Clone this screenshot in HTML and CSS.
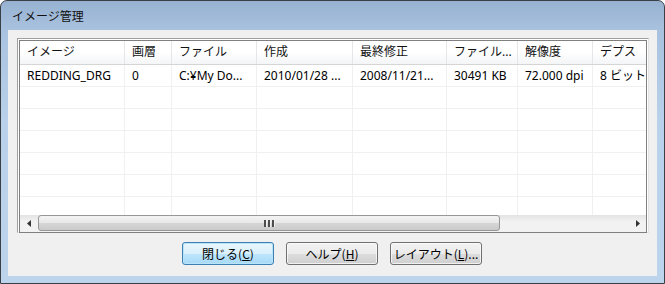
FILE: index.html
```html
<!DOCTYPE html>
<html lang="ja">
<head>
    <meta charset="UTF-8">
    <title>イメージ管理</title>
    <link rel="stylesheet" href="styles.css">
</head>
<body>
    <div class="window">
        <div class="titlebar">イメージ管理</div>

        <div class="client">
            <div class="listbox">
                <div class="list-inner">
                    <div class="grid header">
                        <div class="cell">イメージ</div>
                        <div class="cell">画層</div>
                        <div class="cell">ファイル</div>
                        <div class="cell">作成</div>
                        <div class="cell">最終修正</div>
                        <div class="cell">ファイル...</div>
                        <div class="cell">解像度</div>
                        <div class="cell">デプス</div>
                    </div>

                    <div class="rows">
                        <div class="grid row">
                            <div class="cell">REDDING_DRG</div>
                            <div class="cell">0</div>
                            <div class="cell">C:¥My Do...</div>
                            <div class="cell">2010/01/28 ...</div>
                            <div class="cell">2008/11/21...</div>
                            <div class="cell">30491 KB</div>
                            <div class="cell">72.000 dpi</div>
                            <div class="cell">8 ビット</div>
                        </div>
                        <div class="grid row"><div class="cell"></div><div class="cell"></div><div class="cell"></div><div class="cell"></div><div class="cell"></div><div class="cell"></div><div class="cell"></div><div class="cell"></div></div>
                        <div class="grid row"><div class="cell"></div><div class="cell"></div><div class="cell"></div><div class="cell"></div><div class="cell"></div><div class="cell"></div><div class="cell"></div><div class="cell"></div></div>
                        <div class="grid row"><div class="cell"></div><div class="cell"></div><div class="cell"></div><div class="cell"></div><div class="cell"></div><div class="cell"></div><div class="cell"></div><div class="cell"></div></div>
                        <div class="grid row"><div class="cell"></div><div class="cell"></div><div class="cell"></div><div class="cell"></div><div class="cell"></div><div class="cell"></div><div class="cell"></div><div class="cell"></div></div>
                        <div class="grid row"><div class="cell"></div><div class="cell"></div><div class="cell"></div><div class="cell"></div><div class="cell"></div><div class="cell"></div><div class="cell"></div><div class="cell"></div></div>
                        <div class="grid row"><div class="cell"></div><div class="cell"></div><div class="cell"></div><div class="cell"></div><div class="cell"></div><div class="cell"></div><div class="cell"></div><div class="cell"></div></div>
                    </div>

                    <div class="hscroll">
                        <div class="arrow">
                            <svg width="4" height="7" viewBox="0 0 4 7"><path d="M4 0 L0 3.5 L4 7 Z" fill="#333"/></svg>
                        </div>
                        <div class="track">
                            <div class="thumb">
                                <span class="grip"></span><span class="grip"></span><span class="grip"></span>
                            </div>
                        </div>
                        <div class="arrow">
                            <svg width="4" height="7" viewBox="0 0 4 7"><path d="M0 0 L4 3.5 L0 7 Z" fill="#333"/></svg>
                        </div>
                    </div>
                </div>
            </div>

            <div class="buttons">
                <button class="btn default">閉じる(<u>C</u>)</button>
                <button class="btn">ヘルプ(<u>H</u>)</button>
                <button class="btn">レイアウト(<u>L</u>)...</button>
            </div>
        </div>
    </div>
</body>
</html>
```

FILE: styles.css
```css
* {
    margin: 0;
    padding: 0;
    box-sizing: border-box;
}

body {
    width: 665px;
    height: 284px;
    font-family: 'Noto Sans', 'Noto Sans CJK JP', sans-serif;
    font-size: 12px;
    color: #000;
    background: #ffffff;
    overflow: hidden;
}

.window {
    width: 665px;
    height: 284px;
    border: 1px solid #3a3f46;
    border-radius: 7px 7px 0 0;
    background: linear-gradient(#97b1d1 0px, #a9c2df 30px, #b9d1ea 120px, #bcd5ed 100%);
    padding: 0 7px 7px 7px;
    display: flex;
    flex-direction: column;
}

.titlebar {
    height: 29px;
    padding-left: 4px;
    line-height: 31px;
    font-size: 12px;
    color: #111;
}

.client {
    flex: 1;
    background: #f0f0f0;
    padding: 8px 8px 0 9px;
    display: flex;
    flex-direction: column;
}

/* list view */
.listbox {
    height: 195px;
    border: 1px solid #a0a0a0;
    border-right-color: #e3e3e3;
    border-bottom-color: #e3e3e3;
    background: #ffffff;
}

.list-inner {
    height: 100%;
    margin: 1px;
    border: 1px solid #808080;
    background: #ffffff;
    position: relative;
    overflow: hidden;
    display: flex;
    flex-direction: column;
}

.grid {
    display: grid;
    grid-template-columns: 105px 47px 85px 96px 94px 71px 75px 80px;
    white-space: nowrap;
}

.cell {
    overflow: hidden;
    padding-left: 7px;
    border-right: 1px solid #f0f0f0;
}

.header {
    height: 24px;
    line-height: 22px;
    background: linear-gradient(#ffffff 0%, #ffffff 45%, #f4f5f7 100%);
    border-bottom: 1px solid #d5d5d5;
    color: #111;
}

.header .cell {
    border-right: 1px solid #e4e6ea;
}

.rows {
    flex: 1;
    overflow: hidden;
}

.row {
    height: 22px;
    line-height: 21px;
    border-bottom: 1px solid #f0f0f0;
}

/* horizontal scrollbar */
.hscroll {
    position: absolute;
    left: 0;
    right: 0;
    bottom: 0;
    height: 17px;
    display: flex;
    background: linear-gradient(#e3e3e3, #f2f2f2 40%, #f2f2f2);
}

.arrow {
    width: 17px;
    display: flex;
    align-items: center;
    justify-content: center;
}

.track {
    flex: 1;
    padding: 0 129px 0 1px;
}

.thumb {
    height: 16px;
    border: 1px solid #979797;
    border-radius: 3px;
    background: linear-gradient(#f3f3f3 0%, #e8e8e8 50%, #d6d6d6 51%, #cbcbcb 100%);
    display: flex;
    align-items: center;
    justify-content: center;
    gap: 1px;
}

.grip {
    width: 2px;
    height: 7px;
    background: #4d4d4d;
    border-right: 1px solid #f0f0f0;
    box-sizing: content-box;
}

/* buttons */
.buttons {
    display: flex;
    justify-content: center;
    gap: 12px;
    margin-top: 9px;
    padding-right: 2px;
}

.btn {
    width: 92px;
    height: 23px;
    font-family: 'Noto Sans CJK JP', 'Noto Sans', sans-serif;
    font-size: 12px;
    color: #000;
    border: 1px solid #707070;
    border-radius: 3px;
    background: linear-gradient(#f2f2f2 0%, #ebebeb 50%, #dddddd 51%, #cfcfcf 100%);
    box-shadow: inset 0 0 0 1px rgba(255,255,255,0.7);
}

.btn u {
    text-underline-offset: 1px;
}

.btn.default {
    border-color: #3c7fb1;
    background: linear-gradient(#eaf6fd 0%, #d9f0fc 50%, #bee6fd 51%, #a7d9f5 100%);
    box-shadow: inset 0 0 0 1px #b8e4fb;
}
```
